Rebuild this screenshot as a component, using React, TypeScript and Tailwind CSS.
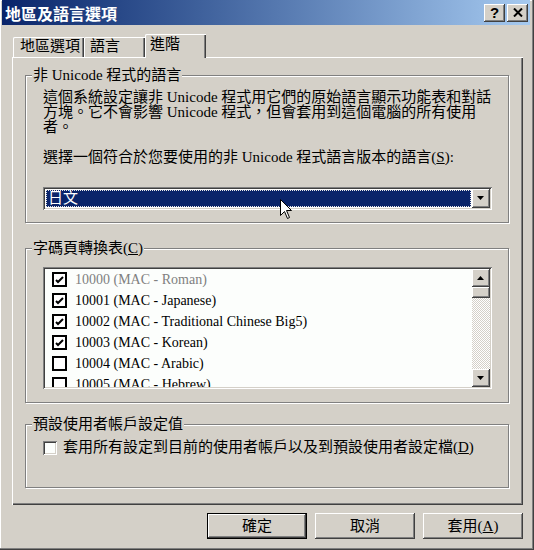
import React from "react";

type GroupBoxProps = {
  title: React.ReactNode;
  className: string;
  children: React.ReactNode;
};

const GroupBox = ({ title, className, children }: GroupBoxProps) => {
  return (
    <div
      className={`relative border border-[#808080] shadow-[1px_1px_0_#ffffff,inset_1px_1px_0_#ffffff] ${className}`}
    >
      <span className="absolute left-[6px] -top-[10px] bg-[#d4d0c8] px-[1px] text-[15px] leading-[18px] whitespace-nowrap">
        {title}
      </span>
      {children}
    </div>
  );
};

const ListCheck = ({ checked }: { checked: boolean }) => (
  <span className="w-[15px] h-[15px] border-2 border-black bg-white flex items-center justify-center shrink-0">
    {checked && (
      <svg width="9" height="8" viewBox="0 0 9 8">
        <path d="M1 4 L3 6 L8 1" stroke="#000" strokeWidth="2" fill="none" />
      </svg>
    )}
  </span>
);

const codePages = [
  { label: "10000 (MAC - Roman)", checked: true, disabled: true },
  { label: "10001 (MAC - Japanese)", checked: true, disabled: false },
  { label: "10002 (MAC - Traditional Chinese Big5)", checked: true, disabled: false },
  { label: "10003 (MAC - Korean)", checked: true, disabled: false },
  { label: "10004 (MAC - Arabic)", checked: false, disabled: false },
  { label: "10005 (MAC - Hebrew)", checked: false, disabled: false },
];

const raised =
  "shadow-[inset_-1px_-1px_0_#404040,inset_1px_1px_0_#ffffff,inset_-2px_-2px_0_#808080,inset_2px_2px_0_#d4d0c8]";

const App = () => {
  return (
    <div className="relative w-[534px] h-[550px] bg-[#d4d0c8] flex flex-col overflow-hidden text-black font-['Liberation_Serif','Noto_Sans_CJK_TC',serif] shadow-[inset_-1px_-1px_0_#404040,inset_-2px_-2px_0_#808080,inset_1px_1px_0_#ffffff]">
      {/* title bar */}
      <div className="ml-[2px] mr-[4px] h-[25px] flex items-center justify-between bg-linear-to-r from-[#0a246a] to-[#a6caf0]">
        <span className="pl-[3px] text-white font-bold text-[16px] leading-[20px] font-['Noto_Sans_CJK_TC',sans-serif]">
          地區及語言選項
        </span>
        <div className="flex gap-[2px] pr-[2px]">
          <div
            className={`w-[21px] h-[18px] bg-[#d4d0c8] flex items-center justify-center text-[15px] font-bold leading-none font-['Liberation_Sans',sans-serif] ${raised}`}
          >
            ?
          </div>
          <div
            className={`w-[21px] h-[18px] bg-[#d4d0c8] flex items-center justify-center ${raised}`}
          >
            <svg width="10" height="9" viewBox="0 0 10 9">
              <path d="M1 0.5 L9 8.5 M9 0.5 L1 8.5" stroke="#000" strokeWidth="2" />
            </svg>
          </div>
        </div>
      </div>

      {/* tabs */}
      <div className="mt-[9px] pl-[13px] h-[23px] flex items-end text-[15px]">
        <div className="w-[71px] h-[20px] pl-[7px] leading-[19px] rounded-tl-[2px] shadow-[inset_1px_0_0_#ffffff,inset_0_1px_0_#ffffff,inset_-1px_0_0_#404040,inset_-2px_0_0_#808080]">
          地區選項
        </div>
        <div className="w-[61px] h-[20px] pl-[6px] leading-[19px] rounded-tl-[2px] shadow-[inset_1px_0_0_#ffffff,inset_0_1px_0_#ffffff,inset_-1px_0_0_#404040,inset_-2px_0_0_#808080]">
          語言
        </div>
        <div className="relative z-10 -mb-[1px] w-[61px] h-[24px] pl-[5px] leading-[20px] bg-[#d4d0c8] rounded-tl-[2px] shadow-[inset_1px_0_0_#ffffff,inset_0_1px_0_#ffffff,inset_-1px_0_0_#404040,inset_-2px_0_0_#808080]">
          進階
        </div>
      </div>

      {/* tab panel */}
      <div className="ml-[12px] w-[511px] h-[448px] flex flex-col shadow-[inset_1px_1px_0_#ffffff,inset_-1px_-1px_0_#404040,inset_-2px_-2px_0_#808080]">
        <GroupBox title="非 Unicode 程式的語言" className="ml-[13px] mt-[18px] w-[484px] h-[148px] pl-[17px]">
          <p className="pt-[14px] text-[15px] leading-[15px] whitespace-nowrap">
            這個系統設定讓非 Unicode 程式用它們的原始語言顯示功能表和對話
            <br />
            方塊。它不會影響 Unicode 程式，但會套用到這個電腦的所有使用
            <br />
            者。
          </p>
          <p className="mt-[15px] text-[15px] leading-[15px] whitespace-nowrap">
            選擇一個符合於您要使用的非 Unicode 程式語言版本的語言(<span className="underline">S</span>):
          </p>
          <div className="mt-[22px] w-[449px] h-[23px] bg-white p-[2px] flex shadow-[inset_1px_1px_0_#808080,inset_-1px_-1px_0_#ffffff,inset_2px_2px_0_#404040,inset_-2px_-2px_0_#d4d0c8]">
            <div className="flex-1 p-[1px]">
              <div className="h-full bg-[#0a246a] border border-dotted border-[#e8e8e8] text-white text-[15px] leading-[15px] pl-[1px]">
                日文
              </div>
            </div>
            <div className={`w-[18px] h-[19px] bg-[#d4d0c8] flex items-center justify-center ${raised}`}>
              <svg width="8" height="5" viewBox="0 0 8 5">
                <path d="M0 0 H7 L3.5 4 Z" fill="#000" />
              </svg>
            </div>
          </div>
        </GroupBox>

        <GroupBox
          title={
            <>
              字碼頁轉換表(<span className="underline">C</span>)
            </>
          }
          className="ml-[13px] mt-[25px] w-[484px] h-[155px] pl-[17px]"
        >
          <div className="mt-[18px] w-[449px] h-[122px] bg-[#fcfefc] p-[2px] flex shadow-[inset_1px_1px_0_#808080,inset_-1px_-1px_0_#ffffff,inset_2px_2px_0_#404040,inset_-2px_-2px_0_#d4d0c8]">
            <div className="flex-1 overflow-hidden">
              {codePages.map((cp) => (
                <div key={cp.label} className="h-[21px] pl-[7px] flex items-center gap-[8px]">
                  <ListCheck checked={cp.checked} />
                  <span
                    className={`text-[14px] leading-[21px] whitespace-nowrap ${
                      cp.disabled ? "text-[#808080]" : "text-black"
                    }`}
                  >
                    {cp.label}
                  </span>
                </div>
              ))}
            </div>
            <div className="w-[18px] flex flex-col">
              <div className={`h-[18px] bg-[#d4d0c8] flex items-center justify-center ${raised}`}>
                <svg width="8" height="5" viewBox="0 0 8 5">
                  <path d="M3.5 0 L7 4 H0 Z" fill="#000" />
                </svg>
              </div>
              <div className={`h-[11px] bg-[#d4d0c8] ${raised}`} />
              <div className="flex-1 bg-[repeating-conic-gradient(#ffffff_0_25%,#d4d0c8_0_50%)] bg-[length:2px_2px]" />
              <div className={`h-[18px] bg-[#d4d0c8] flex items-center justify-center ${raised}`}>
                <svg width="8" height="5" viewBox="0 0 8 5">
                  <path d="M0 0 H7 L3.5 4 Z" fill="#000" />
                </svg>
              </div>
            </div>
          </div>
        </GroupBox>

        <GroupBox title="預設使用者帳戶設定值" className="ml-[13px] mt-[21px] w-[484px] h-[64px] pl-[17px]">
          <div className="mt-[15px] flex items-center gap-[6px]">
            <span className="w-[14px] h-[14px] bg-[#fcfefc] shadow-[inset_1px_1px_0_#808080,inset_-1px_-1px_0_#ffffff,inset_2px_2px_0_#404040,inset_-2px_-2px_0_#d4d0c8]" />
            <span className="text-[15px] leading-[15px] whitespace-nowrap">
              套用所有設定到目前的使用者帳戶以及到預設使用者設定檔(<span className="underline">D</span>)
            </span>
          </div>
        </GroupBox>
      </div>

      {/* buttons */}
      <div className="mt-[8px] pr-[11px] flex justify-end gap-[8px] text-[15px]">
        <div className="w-[100px] h-[26px] border border-black">
          <div className={`w-full h-full flex items-center justify-center ${raised}`}>確定</div>
        </div>
        <div className={`w-[100px] h-[26px] flex items-center justify-center ${raised}`}>取消</div>
        <div className={`w-[100px] h-[26px] flex items-center justify-center ${raised}`}>
          套用(<span className="underline">A</span>)
        </div>
      </div>

      {/* mouse pointer */}
      <svg className="absolute left-[280px] top-[199px]" width="13" height="21" viewBox="0 0 13 21">
        <path
          d="M0.5 0.5 V16.5 L4.5 12.5 L7.5 19.5 L9.5 18.5 L6.5 11.5 H11.5 Z"
          fill="#fff"
          stroke="#000"
          strokeWidth="1"
        />
      </svg>
    </div>
  );
};

export default App;
